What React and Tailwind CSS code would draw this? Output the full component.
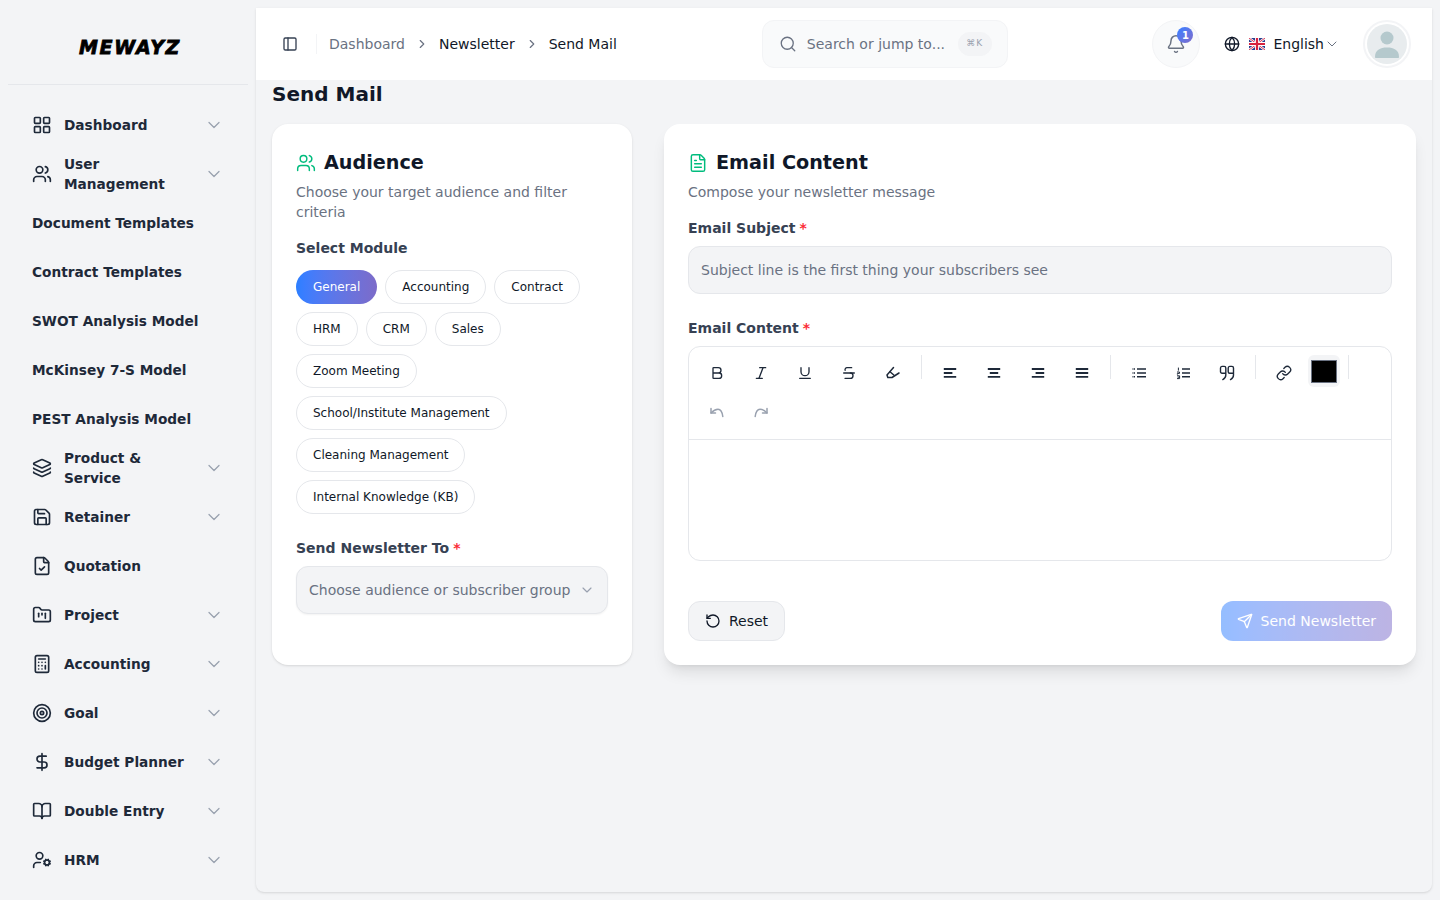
import {
  LayoutGrid, Users, Layers, Save, FileCheck, FolderKanban, Calculator, Target, DollarSign, BookOpen, UserCog,
  ChevronDown, ChevronRight, PanelLeft, Search, Bell, Globe, FileText, Bold, Italic, Underline, Strikethrough,
  Link, RotateCcw, Send,
} from 'lucide-react'

const NAV = [
  { label: 'Dashboard', icon: LayoutGrid, arrow: true },
  { label: 'User Management', icon: Users, arrow: true },
  { label: 'Document Templates' },
  { label: 'Contract Templates' },
  { label: 'SWOT Analysis Model' },
  { label: 'McKinsey 7-S Model' },
  { label: 'PEST Analysis Model' },
  { label: 'Product & Service', icon: Layers, arrow: true },
  { label: 'Retainer', icon: Save, arrow: true },
  { label: 'Quotation', icon: FileCheck },
  { label: 'Project', icon: FolderKanban, arrow: true },
  { label: 'Accounting', icon: Calculator, arrow: true },
  { label: 'Goal', icon: Target, arrow: true },
  { label: 'Budget Planner', icon: DollarSign, arrow: true },
  { label: 'Double Entry', icon: BookOpen, arrow: true },
  { label: 'HRM', icon: UserCog, arrow: true },
]

const MODULES = [
  'General', 'Accounting', 'Contract', 'HRM', 'CRM', 'Sales', 'Zoom Meeting',
  'School/Institute Management', 'Cleaning Management', 'Internal Knowledge (KB)',
]

// toolbar icons lucide doesn't draw the same way
function Glyph({ children, stroke = 1.6 }) {
  return (
    <svg width="16" height="16" viewBox="0 0 16 16" fill="none" stroke="currentColor" strokeWidth={stroke} strokeLinecap="round" strokeLinejoin="round">
      {children}
    </svg>
  )
}

const HighlightIcon = () => (
  <Glyph stroke={1.5}>
    <path d="M8.5 2.5 2 10l.8 2.5H7L14 8" />
    <path d="M5 6.8 8.8 10" />
  </Glyph>
)
const AlignLeftIcon = () => (
  <Glyph stroke={1.8}><path d="M1.8 4h12.4M1.8 8h8.6M1.8 11.8h12.4" strokeLinecap="butt" /></Glyph>
)
const AlignCenterIcon = () => (
  <Glyph stroke={1.8}><path d="M1.8 4h12.4M3.8 8h8.4M1.8 11.8h12.4" strokeLinecap="butt" /></Glyph>
)
const AlignRightIcon = () => (
  <Glyph stroke={1.8}><path d="M1.8 4h12.4M5.6 8h8.6M1.8 11.8h12.4" strokeLinecap="butt" /></Glyph>
)
const AlignJustifyIcon = () => (
  <Glyph stroke={1.8}><path d="M1.8 4h12.4M1.8 8h12.4M1.8 11.8h12.4" strokeLinecap="butt" /></Glyph>
)
const ListIcon = () => (
  <Glyph stroke={1.6}>
    <path d="M6 4h9M6 8h9M6 11.8h9" strokeLinecap="butt" />
    <path d="M1.5 4h2.5M1.5 8h2.5M1.5 11.8h2.5" strokeLinecap="butt" strokeWidth="1.4" strokeDasharray="1 0.5" />
  </Glyph>
)
const ListOrderedIcon = () => (
  <Glyph stroke={1.6}>
    <path d="M7 4h8M7 8h8M7 11.8h8" strokeLinecap="butt" />
    <path d="M3.4 2.6v3M2 7h2.5v1.4H2.4v1.2M2 10.8h2.6v2.8H2M2.6 12.2h2" strokeWidth="1" strokeLinecap="butt" strokeLinejoin="miter" />
  </Glyph>
)
const QuoteIcon = () => (
  <Glyph stroke={1.4}>
    <path d="M6.8 8.2H3A1.5 1.5 0 0 1 1.5 6.7V3A1.6 1.6 0 0 1 3 1.4h2.2A1.6 1.6 0 0 1 6.8 3v7c0 2-1 3.6-3 4.6" />
    <path d="M14.5 8.2h-3.8a1.5 1.5 0 0 1-1.5-1.5V3a1.6 1.6 0 0 1 1.5-1.6h2.2A1.6 1.6 0 0 1 14.5 3v7c0 2-1 3.6-3 4.6" />
  </Glyph>
)
const UndoIcon = () => (
  <Glyph stroke={1.5}>
    <path d="M2 3.5V8h4.5" />
    <path d="M2 8C4.6 5.2 6.8 4.2 9 4.2c2.6 0 4.2 2.6 4.8 7.3" />
  </Glyph>
)
const RedoIcon = () => (
  <Glyph stroke={1.5}>
    <path d="M14 3.5V8H9.5" />
    <path d="M14 8C11.4 5.2 9.2 4.2 7 4.2c-2.6 0-4.2 2.6-4.8 7.3" />
  </Glyph>
)

function UkFlag() {
  return (
    <svg width="16" height="12" viewBox="0 0 16 12">
      <rect width="16" height="12" rx="1" fill="#2b3f8f" />
      <path d="M0 0l16 12M16 0L0 12" stroke="#fff" strokeWidth="2.4" />
      <path d="M0 0l16 12M16 0L0 12" stroke="#d8233f" strokeWidth="0.9" />
      <path d="M8 0v12M0 6h16" stroke="#fff" strokeWidth="4" />
      <path d="M8 0v12M0 6h16" stroke="#d8233f" strokeWidth="2.2" />
    </svg>
  )
}

function Sidebar() {
  return (
    <aside className="w-64 shrink-0">
      <div className="mx-2 flex h-[85px] items-center justify-center border-b border-gray-200 pt-[10px]">
        <span className="ml-1 text-[19px] leading-none font-bold italic tracking-[1.6px] text-black [-webkit-text-stroke:0.8px_black]">
          MEWAYZ
        </span>
      </div>
      <nav className="mt-[19px] flex flex-col gap-2 px-8">
        {NAV.map(({ label, icon: Icon, arrow }) => (
          <div key={label} className="flex h-[41px] items-center text-[13.7px] leading-5 font-bold text-gray-800">
            {Icon && <Icon size={20} strokeWidth={2} className="mr-3 shrink-0" />}
            <span className={arrow ? 'min-w-0 flex-1 pr-2' : 'flex-1 whitespace-nowrap'}>{label}</span>
            {arrow && <ChevronDown size={20} strokeWidth={1.5} className="shrink-0 text-gray-400" />}
          </div>
        ))}
      </nav>
    </aside>
  )
}

function Header() {
  return (
    <header className="flex h-[72px] shrink-0 items-center bg-white pl-[26px] pr-[21px]">
      <PanelLeft size={16} className="text-gray-700" />
      <div className="ml-[18px] mr-3 h-5 w-px bg-gray-100" />
      <div className="flex items-center text-sm text-gray-900">
        <span className="text-gray-500">Dashboard</span>
        <ChevronRight size={14} className="mx-[10px] text-gray-500" />
        <span>Newsletter</span>
        <ChevronRight size={14} className="mx-[10px] text-gray-500" />
        <span>Send Mail</span>
      </div>
      <div className="ml-[145px] flex h-12 w-[246px] items-center rounded-xl border border-gray-100 bg-gray-50 pl-4 pr-[15px]">
        <Search size={18} strokeWidth={1.75} className="shrink-0 text-gray-500" />
        <span className="ml-[10px] flex-1 text-sm whitespace-nowrap text-gray-500">Search or jump to...</span>
        <span className="flex h-6 w-[34px] shrink-0 items-center justify-center rounded-full border border-gray-100 bg-gray-100 text-[9px] tracking-[1px] text-gray-400">⌘K</span>
      </div>
      <div className="relative ml-auto flex h-12 w-12 items-center justify-center rounded-full border border-gray-100 bg-gray-50">
        <Bell size={20} strokeWidth={1.75} className="text-gray-500" />
        <span className="absolute top-[6px] right-[6px] flex h-4 w-4 items-center justify-center rounded-full bg-gradient-to-br from-blue-500 to-[#7c6bc9] text-[10px] font-bold text-white">1</span>
      </div>
      <div className="ml-6 flex items-center">
        <Globe size={16} className="text-gray-900" />
        <span className="ml-[9px]"><UkFlag /></span>
        <span className="ml-2 text-sm text-gray-900">English</span>
        <ChevronDown size={16} strokeWidth={1.5} className="text-gray-500" />
      </div>
      <div className="ml-[23px] flex h-12 w-12 items-center justify-center rounded-full border-2 border-gray-100 bg-white">
        <svg width="40" height="40" viewBox="0 0 40 40" className="rounded-full">
          <rect width="40" height="40" fill="#e8ecee" />
          <circle cx="20" cy="14" r="6.5" fill="#b5c9cd" />
          <path d="M8 33c0-7 5-9.5 12-9.5S32 26 32 33c0 .6-.4 1-1 1H9c-.6 0-1-.4-1-1z" fill="#b5c9cd" />
        </svg>
      </div>
    </header>
  )
}

function Required() {
  return <span className="ml-1 text-red-500">*</span>
}

function Label({ children, required }) {
  return (
    <div className="text-sm leading-5 font-bold text-gray-700">
      {children}
      {required && <Required />}
    </div>
  )
}

function Audience() {
  return (
    <section className="w-[360px] shrink-0 rounded-2xl bg-white p-6 shadow-sm">
      <div className="mt-px flex h-7 items-center">
        <Users size={20} strokeWidth={1.75} className="mr-2 text-emerald-500" />
        <h2 className="text-[19.2px] leading-7 font-bold text-gray-900">Audience</h2>
      </div>
      <p className="mt-[5px] text-sm leading-5 text-gray-500">Choose your target audience and filter criteria</p>
      <div className="mt-4"><Label>Select Module</Label></div>
      <div className="mt-3 flex flex-wrap gap-2">
        {MODULES.map((name, i) => (
          <span
            key={name}
            className={
              i === 0
                ? 'flex h-[34px] items-center rounded-full bg-gradient-to-r from-blue-500 to-[#7c6bc9] px-[17px] text-xs text-white'
                : 'flex h-[34px] items-center rounded-full border border-gray-200 bg-white px-4 text-xs text-gray-900'
            }
          >
            {name}
          </span>
        ))}
      </div>
      <div className="mt-6"><Label required>Send Newsletter To</Label></div>
      <div className="mt-2 flex h-12 items-center justify-between rounded-xl border border-gray-200 bg-gray-100 px-3 shadow-xs">
        <span className="text-sm text-gray-500">Choose audience or subscriber group</span>
        <ChevronDown size={16} strokeWidth={1.75} className="text-gray-400" />
      </div>
    </section>
  )
}

function ToolBtn({ icon: Icon, muted, lucide }) {
  return (
    <span className={muted ? 'flex h-9 w-8 items-center justify-center text-gray-400' : 'flex h-9 w-8 items-center justify-center text-gray-800'}>
      {lucide ? <Icon size={16} strokeWidth={2} /> : <Icon />}
    </span>
  )
}

function Sep() {
  return <span className="h-6 w-px bg-gray-200" />
}

function Toolbar() {
  return (
    <div className="flex flex-wrap items-start gap-x-3 gap-y-1 border-b border-gray-200 px-3 py-2">
      <ToolBtn icon={Bold} lucide />
      <ToolBtn icon={Italic} lucide />
      <ToolBtn icon={Underline} lucide />
      <ToolBtn icon={Strikethrough} lucide />
      <ToolBtn icon={HighlightIcon} />
      <Sep />
      <ToolBtn icon={AlignLeftIcon} />
      <ToolBtn icon={AlignCenterIcon} />
      <ToolBtn icon={AlignRightIcon} />
      <ToolBtn icon={AlignJustifyIcon} />
      <Sep />
      <ToolBtn icon={ListIcon} />
      <ToolBtn icon={ListOrderedIcon} />
      <ToolBtn icon={QuoteIcon} />
      <Sep />
      <ToolBtn icon={Link} lucide />
      <span className="-ml-1 flex h-8 w-8 items-center justify-center rounded-md bg-gray-100">
        <span className="h-[23px] w-[26px] border border-gray-500 bg-black" />
      </span>
      <span className="-ml-1 h-6 w-px bg-gray-200" />
      <ToolBtn icon={UndoIcon} muted />
      <ToolBtn icon={RedoIcon} muted />
    </div>
  )
}

function EmailContent() {
  return (
    <section className="flex-1 rounded-2xl bg-white p-6 shadow-lg">
      <div className="mt-px flex h-7 items-center">
        <FileText size={20} strokeWidth={1.75} className="mr-2 text-emerald-500" />
        <h2 className="text-[19.2px] leading-7 font-bold text-gray-900">Email Content</h2>
      </div>
      <p className="mt-[5px] text-sm leading-5 text-gray-500">Compose your newsletter message</p>
      <div className="mt-4"><Label required>Email Subject</Label></div>
      <div className="mt-2 flex h-12 items-center rounded-xl border border-gray-200 bg-gray-100 px-3 text-sm text-gray-500">
        Subject line is the first thing your subscribers see
      </div>
      <div className="mt-6"><Label required>Email Content</Label></div>
      <div className="mt-2 h-[215px] rounded-xl border border-gray-200 bg-white">
        <Toolbar />
      </div>
      <div className="mt-10 flex items-center justify-between">
        <button className="flex h-10 items-center gap-2 rounded-xl border border-gray-200 bg-gray-100 px-4 text-sm text-gray-900">
          <RotateCcw size={16} />
          Reset
        </button>
        <button className="flex h-10 items-center gap-2 rounded-xl bg-gradient-to-r from-blue-500 to-[#7c6bc9] px-4 text-sm text-white opacity-50">
          <Send size={16} />
          Send Newsletter
        </button>
      </div>
    </section>
  )
}

export default function App() {
  return (
    <div className="flex h-screen overflow-hidden bg-gray-100 font-['DejaVu_Sans',sans-serif]">
      <Sidebar />
      <main className="my-2 mr-2 flex min-w-0 flex-1 flex-col rounded-b-lg bg-gray-100 shadow-sm">
        <Header />
        <div className="px-4">
          <h1 className="text-xl leading-7 font-bold text-gray-900">Send Mail</h1>
          <div className="mt-4 flex items-stretch gap-8">
            <Audience />
            <EmailContent />
          </div>
        </div>
      </main>
    </div>
  )
}
